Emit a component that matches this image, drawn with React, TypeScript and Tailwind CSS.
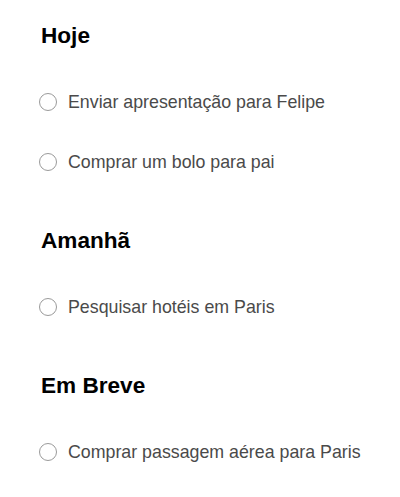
const sections = [
  { title: 'Hoje', items: ['Enviar apresentação para Felipe', 'Comprar um bolo para pai'] },
  { title: 'Amanhã', items: ['Pesquisar hotéis em Paris'] },
  { title: 'Em Breve', items: ['Comprar passagem aérea para Paris'] },
];

export default function App() {
  return (
    <div
      className="min-h-screen bg-white pl-[41px] pr-4 pt-[14px]"
      style={{ fontFamily: '"Liberation Sans", Arial, Helvetica, sans-serif' }}
    >
      {sections.map((section, i) => (
        <section key={section.title} className={i > 0 ? 'mt-[27px]' : ''}>
          <h2 className="flex h-[44px] items-center text-[22.6px] font-bold text-black">{section.title}</h2>
          <ul className="mt-[14px]">
            {section.items.map((item) => (
              <li key={item} className="flex h-[60px] items-center">
                <span className="-ml-[2px] mr-[11px] h-[18px] w-[18px] shrink-0 rounded-full border border-[#9a9a9a]" />
                <span className="whitespace-nowrap text-[17.8px] text-[#4a4a4a]">{item}</span>
              </li>
            ))}
          </ul>
        </section>
      ))}
    </div>
  );
}
